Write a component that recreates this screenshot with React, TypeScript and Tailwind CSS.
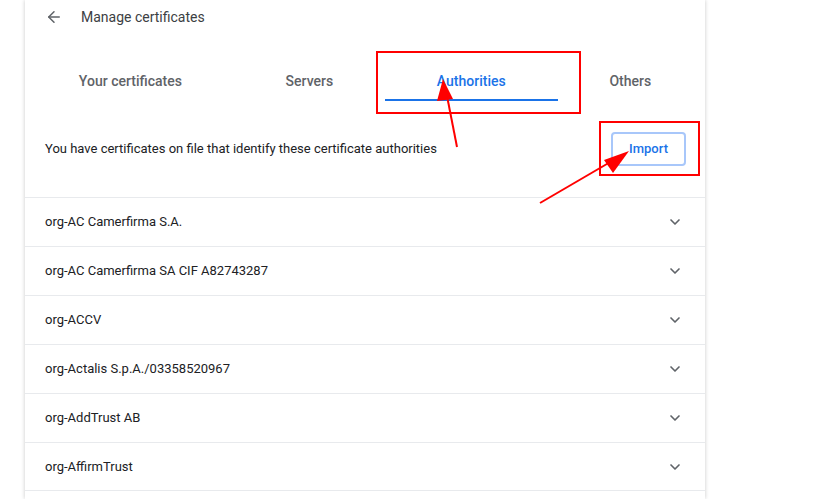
import { ArrowLeft, ChevronDown } from "lucide-react";

const tabs = ["Your certificates", "Servers", "Authorities", "Others"];

const authorities = [
  "org-AC Camerfirma S.A.",
  "org-AC Camerfirma SA CIF A82743287",
  "org-ACCV",
  "org-Actalis S.p.A./03358520967",
  "org-AddTrust AB",
  "org-AffirmTrust",
];

export default function App() {
  return (
    <div className="relative h-[499px] w-[840px] overflow-hidden bg-white font-['Roboto',sans-serif]">
      <div className="ml-[25px] h-full w-[680px] bg-white shadow-[0_0_4px_rgba(0,0,0,0.22)]">
        <div className="flex h-[34px] items-center pl-[20px]">
          <ArrowLeft className="h-[18px] w-[18px] text-[#5f6368]" strokeWidth={2} />
          <span className="ml-[18px] text-[14px] text-[#3c4043]">Manage certificates</span>
        </div>

        <div className="mt-[13px] flex h-[54px] px-[2px]">
          {tabs.map((t) => {
            const active = t === "Authorities";
            return (
              <div
                key={t}
                className={`flex flex-auto flex-col items-center justify-end ${active ? "text-[#1a73e8]" : "text-[#5f6368]"}`}
              >
                <span className="text-[14px] font-medium leading-[20px]">{t}</span>
                <div className={`mt-[8px] h-[2px] w-full ${active ? "bg-[#1a73e8]" : "bg-transparent"}`} />
              </div>
            );
          })}
        </div>

        <div className="flex h-[96px] items-start justify-between pl-[20px] pr-[19px] pt-[31px]">
          <span className="mt-[7px] text-[13px] text-[#202124]">
            You have certificates on file that identify these certificate authorities
          </span>
          <button
            type="button"
            className="h-[34px] w-[75px] rounded-[4px] border-2 border-[#a8c7fa] text-[13px] font-medium text-[#1a73e8]"
          >
            Import
          </button>
        </div>

        {authorities.map((a) => (
          <div
            key={a}
            className="flex h-[49px] items-center justify-between border-t border-[#e8eaed] pl-[20px] pr-[22px] last:border-b"
          >
            <span className="text-[13px] text-[#202124]">{a}</span>
            <ChevronDown className="h-[16px] w-[16px] text-[#5f6368]" strokeWidth={2.5} />
          </div>
        ))}
      </div>

      {/* annotation boxes and arrows */}
      <div className="absolute left-[376px] top-[51px] h-[63px] w-[205px] border-2 border-[#ff0000]" />
      <div className="absolute left-[599px] top-[121px] h-[55px] w-[101px] border-2 border-[#ff0000]" />
      <svg className="absolute left-0 top-0" width="840" height="499">
        <line x1="457" y1="147" x2="447" y2="96" stroke="#ff0000" strokeWidth="2" />
        <polygon points="443,79 437,101 453,99" fill="#ff0000" />
        <line x1="540" y1="203" x2="612" y2="161" stroke="#ff0000" strokeWidth="2" />
        <polygon points="629,151 604,160 613,173" fill="#ff0000" />
      </svg>
    </div>
  );
}
